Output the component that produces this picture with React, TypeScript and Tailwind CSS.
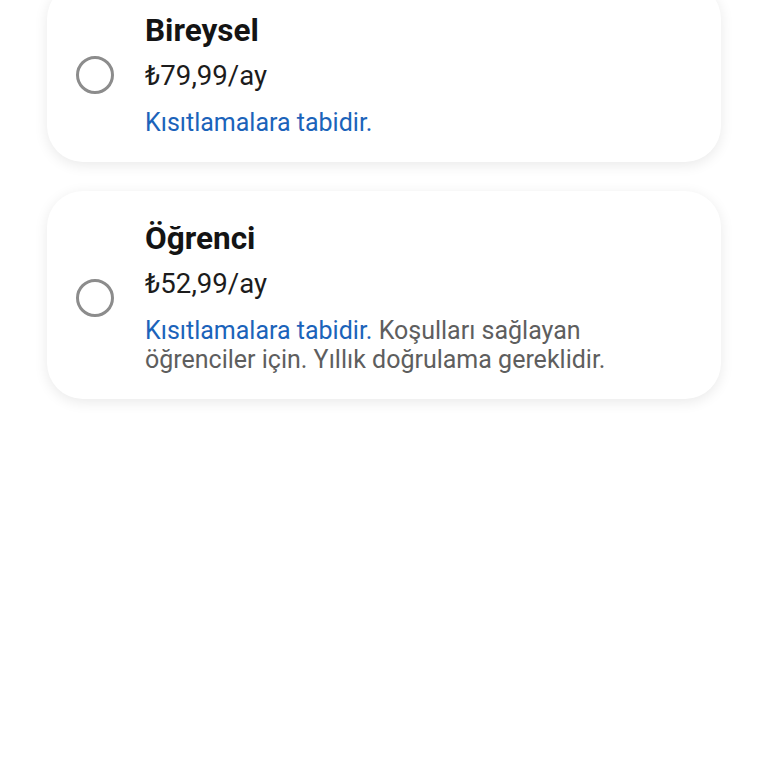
import { ReactNode } from 'react';

interface PlanProps {
  title: string;
  price: string;
  children: ReactNode;
}

function PlanCard({ title, price, children }: PlanProps) {
  return (
    <div className="flex items-center bg-white rounded-[36px] shadow-[0_3px_14px_rgba(0,0,0,0.09)] pl-[29px] pr-6 pt-[30px] pb-[25px]">
      {/* Radio */}
      <div className="w-[38px] h-[38px] rounded-full border-[3px] border-[#8c8c8c] shrink-0" />
      <div className="ml-[31px] flex flex-col">
        <div className="text-[31.5px] leading-[36px] font-bold text-[#141414]">{title}</div>
        <div className="mt-[10px] text-[27.6px] leading-[34px] text-[#1c1c1c]">{price}</div>
        <div className="mt-[15px] text-[25px] leading-[29px] text-[#5e5e5e]">{children}</div>
      </div>
    </div>
  );
}

export default function App() {
  return (
    <div className="min-h-screen bg-white overflow-hidden" style={{ fontFamily: 'Roboto, "Noto Sans", sans-serif' }}>
      <div className="px-[47px] -mt-[17px] flex flex-col gap-[29px]">
        <PlanCard title="Bireysel" price="₺79,99/ay">
          <span className="text-[#1b63ba]">Kısıtlamalara tabidir.</span>
        </PlanCard>
        <PlanCard title="Öğrenci" price="₺52,99/ay">
          <span className="text-[#1b63ba]">Kısıtlamalara tabidir.</span> Koşulları sağlayan
          <br />
          öğrenciler için. Yıllık doğrulama gereklidir.
        </PlanCard>
      </div>
    </div>
  );
}
